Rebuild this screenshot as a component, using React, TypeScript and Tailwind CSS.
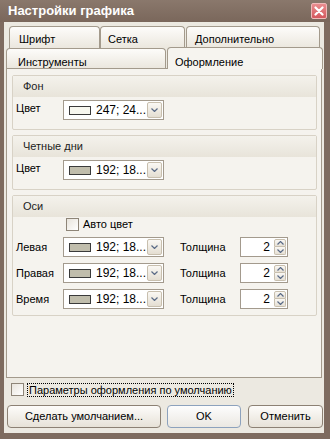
import type { ReactNode } from 'react'

const font = "font-['Liberation_Sans',Arial,sans-serif]"

function Chevron({ up = false }: { up?: boolean }) {
  return (
    <svg width="7" height="4" viewBox="0 0 7 4" className={up ? 'rotate-180' : ''}>
      <path d="M0.5 0.5 L3.5 3.5 L6.5 0.5" fill="none" stroke="#5a6a86" strokeWidth="1.2" />
    </svg>
  )
}

function ColorCombo({ swatch, text }: { swatch: string; text: string }) {
  return (
    <div className="flex h-[20px] w-[101px] items-center border border-[#a39a8d] bg-white pr-[1px]">
      <div className="ml-[5px] h-[9px] w-[22px] border border-[#3a3a3a]" style={{ backgroundColor: swatch }} />
      <span className="ml-[5px] flex-1 text-[12px] leading-none text-black">{text}</span>
      <div className="flex h-[16px] w-[15px] items-center justify-center rounded-[2px] border border-[#c8bfae] bg-gradient-to-b from-[#faf8f4] to-[#e4ded2]">
        <Chevron />
      </div>
    </div>
  )
}

function Spin({ value }: { value: string }) {
  return (
    <div className="flex h-[20px] w-[48px] items-center border border-[#a39a8d] bg-white pr-[1px]">
      <span className="flex-1 pr-[4px] text-right text-[12px] leading-none text-black">{value}</span>
      <div className="flex h-[16px] w-[12px] flex-col">
        <div className="flex h-[8px] items-center justify-center rounded-t-[2px] border border-[#c8bfae] bg-gradient-to-b from-[#faf8f4] to-[#e6e0d5]">
          <Chevron up />
        </div>
        <div className="flex h-[8px] items-center justify-center rounded-b-[2px] border border-t-0 border-[#c8bfae] bg-gradient-to-b from-[#faf8f4] to-[#e6e0d5]">
          <Chevron />
        </div>
      </div>
    </div>
  )
}

function Group({ title, children }: { title: string; children: ReactNode }) {
  return (
    <div className="rounded-[2px] border border-[#d8d2c6] bg-[#f5f3ee]">
      <div className="flex h-[21px] items-center bg-gradient-to-b from-[#f4f2ec] to-[#e8e4da] pl-[10px] text-[11px] text-[#1c1c1c]">
        {title}
      </div>
      {children}
    </div>
  )
}

function Tab({ label, className }: { label: string; className: string }) {
  return (
    <div
      className={`rounded-t-[4px] border border-b-0 border-[#a39a8c] bg-gradient-to-b from-[#fdfcfa] to-[#ebe7de] text-[11px] leading-[14px] text-black ${className}`}
    >
      {label}
    </div>
  )
}

function Checkbox() {
  return <div className="h-[13px] w-[13px] border border-[#8e8578] bg-gradient-to-br from-[#e8e4dc] to-white" />
}

function Button({ label, width, primary = false }: { label: string; width: string; primary?: boolean }) {
  return (
    <div
      className={`flex h-[23px] items-center justify-center rounded-[4px] border text-[11px] text-black ${width} ${
        primary
          ? 'border-[#8da2bd] bg-gradient-to-b from-[#fdfdfd] to-[#ebe8e2]'
          : 'border-[#8c8174] bg-gradient-to-b from-[#fdfcfa] to-[#e7e2d8]'
      }`}
    >
      {label}
    </div>
  )
}

export default function App() {
  const axes = ['Левая', 'Правая', 'Время']

  return (
    <div className={`flex h-[439px] w-[330px] flex-col bg-[#7e6b5f] ${font}`}>
      <div className="flex h-[22px] items-center bg-gradient-to-b from-[#8a786c] to-[#7a675b] pl-[8px] pr-[3px]">
        <span className="flex-1 text-[13px] font-bold text-white">Настройки графика</span>
        <div className="flex h-[16px] w-[16px] items-center justify-center rounded-[2px] border border-[#f0b9b9] bg-gradient-to-b from-[#e98d8f] to-[#d4585d]">
          <svg width="10" height="10" viewBox="0 0 10 10">
            <path d="M1.5 1.5 L8.5 8.5 M8.5 1.5 L1.5 8.5" stroke="white" strokeWidth="2.2" strokeLinecap="round" />
          </svg>
        </div>
      </div>

      <div className="mb-[6px] ml-[4px] mr-[6px] flex flex-1 flex-col bg-[#ece9e1] pt-[4px]">
        <div className="flex h-[22px] pl-[5px]">
          <Tab label="Шрифт" className="h-[22px] w-[91px] pl-[9px] pt-[5px]" />
          <Tab label="Сетка" className="h-[22px] w-[85px] pl-[7px] pt-[5px]" />
          <Tab label="Дополнительно" className="ml-[1px] h-[22px] w-[134px] pl-[8px] pt-[5px]" />
        </div>
        <div className="flex h-[20px] pl-[2px]">
          <Tab label="Инструменты" className="h-[20px] w-[160px] pl-[11px] pt-[6px]" />
          <div className="relative z-10 -mt-[1px] ml-[1px] h-[22px] w-[156px] rounded-t-[4px] border border-b-0 border-[#a39a8c] bg-[#f6f4ef] pl-[7px] pt-[7px] text-[11px] leading-[14px] text-black">
            Оформление
          </div>
        </div>

        <div className="ml-[2px] flex h-[310px] w-[316px] flex-col gap-[5px] border border-[#a39a8c] bg-[#f5f3ee] pl-[5px] pr-[4px] pt-[6px]">
          <Group title="Фон">
            <div className="flex items-center pb-[9px] pl-[3px] pt-[3px] text-[11px]">
              <span className="-mt-[4px] w-[47px]">Цвет</span>
              <ColorCombo swatch="rgb(247,247,239)" text="247; 24..." />
            </div>
          </Group>

          <Group title="Четные дни">
            <div className="flex items-center pb-[9px] pl-[3px] pt-[3px] text-[11px]">
              <span className="-mt-[4px] w-[47px]">Цвет</span>
              <ColorCombo swatch="rgb(192,189,172)" text="192; 18..." />
            </div>
          </Group>

          <Group title="Оси">
            <div className="flex flex-col gap-[6px] pb-[6px] pl-[3px] pt-[1px] text-[11px]">
              <div className="flex h-[13px] items-center pl-[50px]">
                <Checkbox />
                <span className="ml-[4px]">Авто цвет</span>
              </div>
              {axes.map((axis) => (
                <div key={axis} className="flex items-center">
                  <span className="w-[47px]">{axis}</span>
                  <ColorCombo swatch="rgb(192,189,172)" text="192; 18..." />
                  <span className="ml-[16px] w-[60px]">Толщина</span>
                  <Spin value="2" />
                </div>
              ))}
            </div>
          </Group>
        </div>

        <div className="mt-[5px] flex h-[13px] items-center pl-[7px] text-[11px]">
          <Checkbox />
          <span className="ml-[3px] border border-dotted border-black px-[1px] leading-[12px]">
            Параметры оформления по умолчанию
          </span>
        </div>

        <div className="mt-[9px] flex pl-[3px]">
          <Button label="Сделать умолчанием..." width="w-[154px]" />
          <Button label="OK" width="ml-[6px] w-[74px]" primary />
          <Button label="Отменить" width="ml-[7px] w-[75px]" />
        </div>
      </div>
    </div>
  )
}
